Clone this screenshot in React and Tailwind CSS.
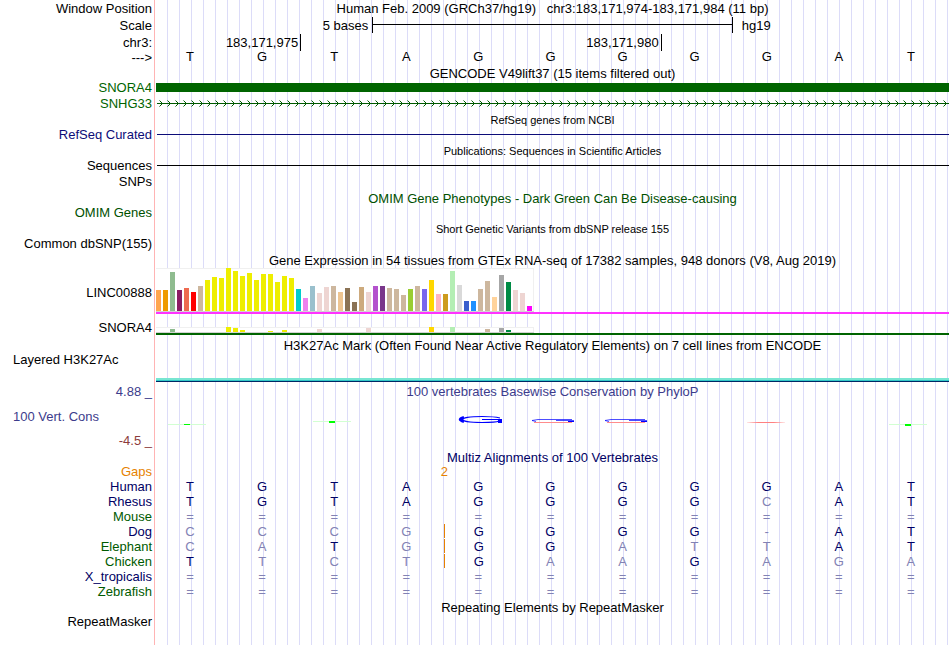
const tissues = [
  ["#ffa54f", 21, 0], ["#ee9a00", 21, 0], ["#8fbc8f", 39, 3], ["#8b1c62", 21, 0],
  ["#ee6a50", 23, 0], ["#ff0000", 19, 0], ["#cdb79e", 25, 0], ["#eeee00", 31, 0],
  ["#eeee00", 34, 0], ["#eeee00", 33, 0], ["#eeee00", 43, 5], ["#eeee00", 40, 4],
  ["#eeee00", 35, 2], ["#eeee00", 38, 0], ["#eeee00", 31, 0], ["#eeee00", 37, 0],
  ["#eeee00", 37, 1], ["#eeee00", 29, 0], ["#eeee00", 35, 2], ["#eeee00", 33, 0],
  ["#00cdcd", 22, 0], ["#ee82ee", 13, 0], ["#9ac0cd", 25, 0], ["#eed5d2", 18, 3],
  ["#eed5d2", 24, 0], ["#cdb79e", 25, 0], ["#eec591", 19, 0], ["#8b7355", 23, 0],
  ["#8b7355", 9, 0], ["#cdaa7d", 24, 0], ["#eed5d2", 19, 4], ["#b452cd", 25, 0],
  ["#7a378b", 25, 0], ["#cdb79e", 23, 0], ["#cdb79e", 22, 0], ["#cdb79e", 16, 0],
  ["#9acd32", 22, 0], ["#cdb79e", 25, 0], ["#7a67ee", 22, 0], ["#ffd700", 31, 5],
  ["#ffb6c1", 17, 0], ["#cd9b1d", 17, 0], ["#b4eeb4", 40, 5], ["#d9d9d9", 26, 0],
  ["#3a5fcd", 10, 0], ["#1e90ff", 10, 0], ["#cdb79e", 22, 0], ["#cdb79e", 30, 3],
  ["#ffd39b", 14, 0], ["#a6a6a6", 36, 4], ["#008b45", 29, 2], ["#eed5d2", 21, 0],
  ["#eed5d2", 18, 0], ["#ff00ff", 5, 0],
];

const bases = "TGTAGGGGGAT";

// lower case = differs from human, drawn faded
const species = [
  { name: "Human", color: "text-[#000064]", seq: "TGTAGGGGGAT" },
  { name: "Rhesus", color: "text-[#000064]", seq: "TGTAGGGGcAT" },
  { name: "Mouse", color: "text-[#005a00]", seq: "===========" },
  { name: "Dog", color: "text-[#000064]", seq: "cccgGGGG-AT", gap: true },
  { name: "Elephant", color: "text-[#005a00]", seq: "caTgGGattAT", gap: true },
  { name: "Chicken", color: "text-[#005a00]", seq: "TtctGaaGaga", gap: true },
  { name: "X_tropicalis", color: "text-[#000064]", seq: "===========" },
  { name: "Zebrafish", color: "text-[#005a00]", seq: "===========" },
];

function Row({ label = "", labelClass = "", className = "h-[15px]", children }) {
  return (
    <div className={`flex items-center ${className}`}>
      <div className={`w-[156px] shrink-0 pr-1 text-right whitespace-nowrap ${labelClass}`}>{label}</div>
      <div className="h-full min-w-0 flex-1 flex flex-col justify-center">{children}</div>
    </div>
  );
}

function Title({ children, className = "pt-px" }) {
  return (
    <Row className="h-4">
      <h2 className={`text-center whitespace-pre ${className}`}>{children}</h2>
    </Row>
  );
}

function GtexChart({ field, height }) {
  return (
    <svg width="378" height={height} shapeRendering="crispEdges" className="block shrink-0">
      <rect width="378" height={height} fill="#f0f0f0" />
      <rect x="0" y="1" width="377" height={height - 2} fill="#fff" />
      <rect x="0" y={height - 1} width="378" height="1" fill="#d2d2d2" />
      {tissues.map((t, i) => (
        <rect key={i} x={i * 7} y={height - 1 - t[field]} width="5" height={t[field]} fill={t[0]} />
      ))}
    </svg>
  );
}

function BigG() {
  return (
    <g fill="none" stroke="#0000ff">
      <path d="M44 16 C38 14.5 32 14.5 26 14.5 C0 14.5 0 20.5 26 20.5 C34 20.5 40 20.5 43 19" strokeWidth="1.2" />
      <path d="M8 15.5 C3 17 3 18 8 19.5" strokeWidth="3" />
      <path d="M26 17.5 H46" strokeWidth="1" />
      <rect x="42" y="18" width="4" height="3" fill="#0000ff" stroke="none" />
    </g>
  );
}

function SmallG({ y }) {
  return (
    <g fill="none">
      <path d={`M44 ${y + 0.5} H10 L4 ${y + 1.5} L8 ${y + 2.5} M28 ${y + 1.5} H46`} stroke="#0000ff" strokeWidth="0.7" />
      <path d={`M40 ${y + 2.5} H46`} stroke="#0000ff" strokeWidth="1" />
      <path d={`M6 ${y + 3.5} H44`} stroke="#ff8c8c" strokeWidth="1" />
    </g>
  );
}

function LogoT({ x = 0, y, thick = 1 }) {
  return (
    <g shapeRendering="crispEdges">
      <rect x={x} y={y} width="38" height="1" fill="#d2ffd2" />
      <rect x={x + 16} y={y} width="6" height={thick} fill="#00ff00" />
    </g>
  );
}

// one drawing per base, null where the score is about zero
const logos = [
  <LogoT y={22} />,
  null,
  <LogoT x={1} y={19} thick={2} />,
  null,
  <BigG />,
  <SmallG y={17} />,
  <SmallG y={17} />,
  null,
  <rect x="2" y="20" width="38" height="1" fill="url(#fade)" />,
  null,
  <LogoT y={22} thick={2} />,
];

export default function App() {
  return (
    <main className="min-h-screen overflow-hidden pr-px font-['Liberation_Sans',Arial,sans-serif] text-[13px] leading-[15px] text-black bg-[linear-gradient(to_right,#fff_154px,#ffb4b4_154px,#ffb4b4_155px,#fff_155px,#fff_156px,transparent_156px),repeating-linear-gradient(to_right,#fff_0px,#fff_11px,#dcdcf8_11px,#dcdcf8_12px)]">
      <Row label="Window Position" className="h-4">
        <h1 className="text-center whitespace-pre">{"Human Feb. 2009 (GRCh37/hg19)   chr3:183,171,974-183,171,984 (11 bp)"}</h1>
      </Row>
      <Row label="Scale" className="h-[18px]">
        <div className="grid grid-cols-11 items-center">
          <span className="col-span-3 pr-1 text-right">5 bases</span>
          <div className="col-span-5 h-4 border-x border-black pb-px flex items-center">
            <div className="h-px w-full bg-black" />
          </div>
          <span className="col-span-3 pl-[9px]">hg19</span>
        </div>
      </Row>
      <Row label="chr3:" labelClass="pt-px" className="h-4">
        <div className="grid grid-cols-11 leading-[17px]">
          <span className="col-span-2 pr-[2px] text-right">183,171,975</span>
          <span className="col-span-5 border-l border-black pr-[2px] text-right">183,171,980</span>
          <span className="col-span-4 border-l border-black" />
        </div>
      </Row>
      <Row label="--->">
        <div className="grid grid-cols-11 pb-[2px] text-center">
          {bases.split("").map((b, i) => (
            <span key={i} className="pr-1">{b}</span>
          ))}
        </div>
      </Row>

      <Title>GENCODE V49lift37 (15 items filtered out)</Title>
      <Row label="SNORA4" labelClass="text-[#006400]" className="h-[15px] pb-[2px]">
        <div className="h-[9px] bg-[#006400]" />
      </Row>
      <Row label="SNHG33" labelClass="text-[#006400]">
        <svg width="100%" height="7" className="block">
          <defs>
            <pattern id="strand" width="8" height="7" patternUnits="userSpaceOnUse">
              <path d="M3.5 0.5 L6.5 3.5 L3.5 6.5" fill="none" stroke="#005a00" strokeWidth="1" />
            </pattern>
            <linearGradient id="fade">
              <stop offset="0" stopColor="#ff8080" stopOpacity="0.2" />
              <stop offset="0.3" stopColor="#ff8080" />
              <stop offset="0.7" stopColor="#ff8080" />
              <stop offset="1" stopColor="#ff8080" stopOpacity="0.2" />
            </linearGradient>
          </defs>
          <rect x="1" y="3" width="100%" height="1" fill="#005a00" />
          <rect width="100%" height="7" fill="url(#strand)" />
        </svg>
      </Row>

      <Title className="pt-[3px] text-[11px]">RefSeq genes from NCBI</Title>
      <Row label="RefSeq Curated" labelClass="text-[#0c0c78]">
        <div className="ml-px h-px bg-[#0c0c78]" />
      </Row>

      <Title className="pt-[3px] text-[11px]">Publications: Sequences in Scientific Articles</Title>
      <Row label="Sequences">
        <div className="ml-px h-px bg-black" />
      </Row>
      <Row label="SNPs" className="h-4" />

      <Title className="pt-[3px] text-[#005000]">OMIM Gene Phenotypes - Dark Green Can Be Disease-causing</Title>
      <Row label="OMIM Genes" labelClass="text-[#005000]" />

      <Title className="pt-[3px] text-[11px]">Short Genetic Variants from dbSNP release 155</Title>
      <Row label="Common dbSNP(155)" labelClass="pb-px" className="h-4" />

      <Title>Gene Expression in 54 tissues from GTEx RNA-seq of 17382 samples, 948 donors (V8, Aug 2019)</Title>
      <Row label="LINC00888" labelClass="pt-[3px]" className="h-[46px]">
        <GtexChart field={1} height={44} />
        <div className="h-[2px] bg-[#ff32ff]" />
      </Row>
      <Row label="SNORA4" labelClass="pt-[6px]" className="h-[21px]">
        <div className="mt-auto">
          <GtexChart field={2} height={6} />
          <div className="h-[2px] bg-[#006400]" />
        </div>
      </Row>

      <Row className="h-[17px]">
        <h2 className="pt-1 text-center">H3K27Ac Mark (Often Found Near Active Regulatory Elements) on 7 cell lines from ENCODE</h2>
      </Row>
      <div className="h-[26px] pl-[13px]">Layered H3K27Ac</div>
      <Row className="h-1">
        <div className="h-[2px] bg-[#78e6d2]" />
        <div className="h-px bg-[#32c8c8]" />
        <div className="h-px bg-[#002864]" />
      </Row>

      <div className="flex h-[67px] pt-[2px]">
        <div className="flex h-16 w-[156px] shrink-0 flex-col justify-between pr-1 text-right">
          <span className="text-[#3c3c8c]">4.88 _</span>
          <span className="pl-[13px] text-left text-[#3c3c8c]">100 Vert. Cons</span>
          <span className="text-[#8c3c3c]">-4.5 _</span>
        </div>
        <div className="flex-1">
          <h2 className="text-center text-[#3c3c8c]">100 vertebrates Basewise Conservation by PhyloP</h2>
          <div className="grid grid-cols-11 pt-[3px]">
            {logos.map((logo, i) => (
              <svg key={i} width="48" height="28" className="ml-3 block">{logo}</svg>
            ))}
          </div>
        </div>
      </div>

      <Row>
        <h2 className="pt-[2px] text-center text-[#000064]">Multiz Alignments of 100 Vertebrates</h2>
      </Row>
      <table className="w-full table-fixed border-separate border-spacing-0">
        <colgroup>
          <col className="w-[156px]" />
          {bases.split("").map((b, i) => <col key={i} />)}
        </colgroup>
        <tbody>
          <tr className="text-[#e68200]">
            <th className="p-0 pr-1 text-right font-normal">Gaps</th>
            <td colSpan="3" className="p-0" />
            <td colSpan="2" className="p-0 text-center">2</td>
            <td colSpan="6" className="p-0" />
          </tr>
          {species.map((s) => (
            <tr key={s.name}>
              <th className={`p-0 pr-1 text-right font-normal ${s.color}`}>{s.name}</th>
              {s.seq.split("").map((c, i) => (
                <td key={i} className="p-0">
                  <div className={`h-[14px] mb-px pr-1 text-center ${s.gap && i === 4 ? "border-l border-[#e68200]" : ""} ${/[A-Z]/.test(c) ? "text-[#000064]" : "text-[#8282b4]"}`}>
                    {c.toUpperCase()}
                  </div>
                </td>
              ))}
            </tr>
          ))}
        </tbody>
      </table>

      <Title>Repeating Elements by RepeatMasker</Title>
      <Row label="RepeatMasker" labelClass="pb-px" className="h-[14px]" />
    </main>
  );
}
